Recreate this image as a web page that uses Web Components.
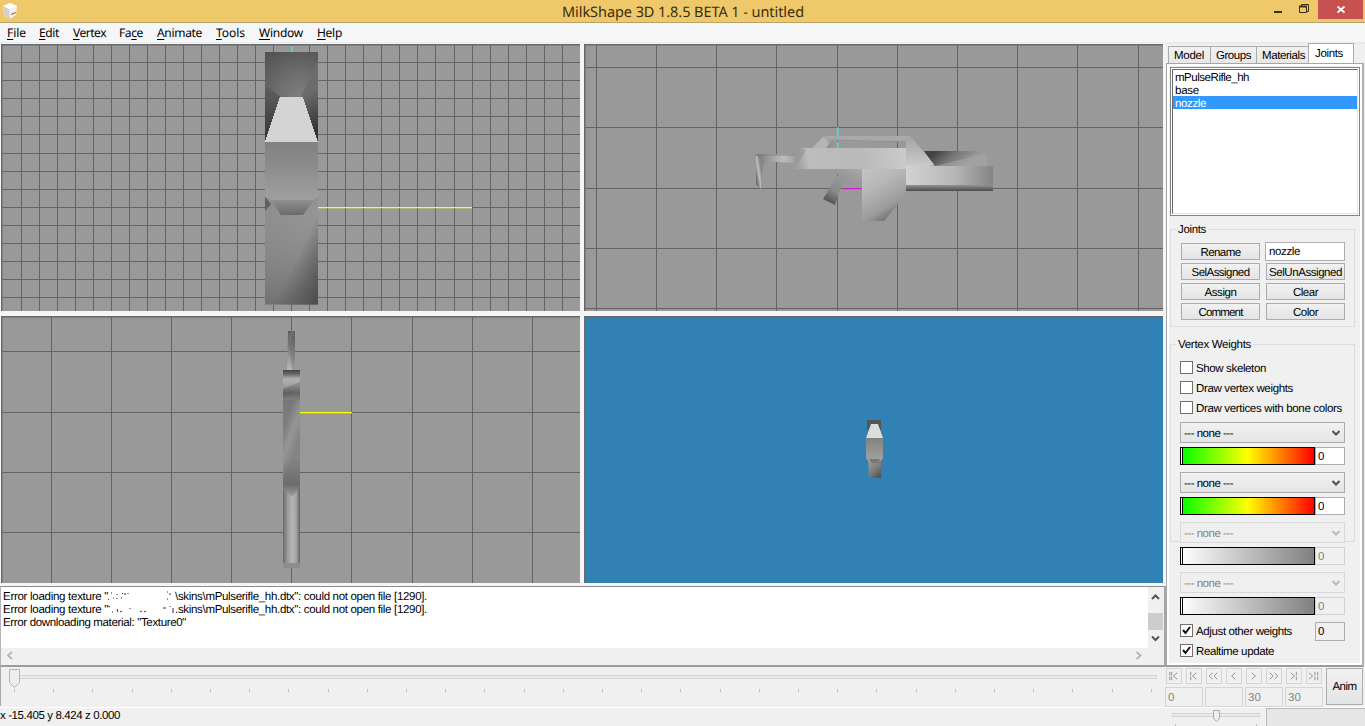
<!DOCTYPE html>
<html lang="en">
<head>
<meta charset="utf-8">
<title>MilkShape 3D 1.8.5 BETA 1 - untitled</title>
<style>
html,body{margin:0;height:726px;overflow:hidden;background:#f0f0f0;font-family:"Liberation Sans",Arial,sans-serif;font-size:11.5px;color:#000}
</style>
</head>
<body>
<milk-app></milk-app>
<script>
const pen = document.createElement('canvas').getContext('2d');
const define = (name, css, html, after) => customElements.define(name, class extends HTMLElement {
  connectedCallback() {
    if (this.shadowRoot) return;
    const root = this.attachShadow({mode: 'open'});
    root.innerHTML = `<style>*{box-sizing:border-box}${css}</style>` + (typeof html === 'function' ? html(this) : html);
    if (after) after(this, root);
  }
});

/* Text spaced so that it fills the width in its "w" attribute. */
define('fit-text', ':host{display:block;white-space:pre;text-rendering:geometricPrecision;flex:none;margin:1px 0 -1px}:host([flat]){margin:0}', '<slot></slot>', el => {
  const s = getComputedStyle(el), t = el.textContent, w = +el.getAttribute('w');
  pen.font = `${s.fontSize} ${s.fontFamily}`;
  el.style.width = w + 'px';
  el.style.letterSpacing = ((w - pen.measureText(t).width) / t.length).toFixed(3) + 'px';
});

define('title-bar', `:host{display:flex;height:23px;background:#efc869;border-bottom:1px solid #b9a36c;align-items:flex-start}
.logo{width:18px;height:18px;margin:2px 0 0 1px}.t{flex:1;display:flex;padding-left:543px;font:14.5px/23px "Noto Sans","Open Sans",sans-serif;color:#3a2f12}
.c{width:100px;height:22px}`,
`<svg class="logo" viewBox="0 0 18 18"><path d="M2 4L9 1L16 4L15 13L9 17L3 13Z" fill="#f3efec"/><path d="M2 4L8 7L9 17L3 13Z" fill="#d4cfcd"/><path d="M2 4L9 1L16 4L8 7Z" fill="#fff"/><path d="M10 12.5L15 10.5" stroke="#c0524e" stroke-width="1.3"/></svg>
<div class="t"><fit-text w="242">MilkShape 3D 1.8.5 BETA 1 - untitled</fit-text></div>
<svg class="c" viewBox="1265 0 100 22"><path d="M1274 11h8v2h-8z" fill="#3b3115"/><path d="M1299.500 6.500h7v6h-7zM1301.500 6V4.500h7V11.500H1307" fill="none" stroke="#3b3115"/><path d="M1299 5.500h8v2h-8z" fill="#3b3115"/><path d="M1318 0h45v19h-45z" fill="#c75050"/><path d="M1337.500 6.500l7 6M1344.500 6.500l-7 6" stroke="#fff" stroke-width="1.7"/></svg>`);

const menus = [['File',0,19,7],['Edit',0,20,39],['Vertex',0,33,73],['Face',2,24,119],['Animate',0,45,157],['Tools',0,29,216],['Window',0,44,259],['Help',0,25,317]];
define('menu-bar', `:host{display:grid;grid-template-columns:${menus.map((m,i)=>(menus[i+1]?menus[i+1][3]-m[3]:100)+'px').join(' ')};height:21px;padding-left:7px;background:#f5f6f7;border-bottom:2px solid #e9eaeb;font:12px/20px "Noto Sans","Open Sans",sans-serif}u{text-underline-offset:2px}`,
  menus.map(m => `<fit-text flat w="${m[2]}">${m[0].slice(0,m[1])}<u>${m[0][m[1]]}</u>${m[0].slice(m[1]+1)}</fit-text>`).join(''));

const stops = l => l.map(([o,c]) => `<stop offset="${o}" stop-color="${c}"/>`).join('');
const lg = (id,x1,y1,x2,y2,l) => `<linearGradient id="${id}" gradientUnits="userSpaceOnUse" x1="${x1}" y1="${y1}" x2="${x2}" y2="${y2}">${stops(l)}</linearGradient>`;
const frontModel = `<defs>
<radialGradient id="a" gradientUnits="userSpaceOnUse" cx="300" cy="96" r="56">${stops([[0,'#7e7e7e'],[.4,'#6e6e6e'],[1,'#505050']])}</radialGradient>${lg('a3',318,130,302,95,[[0,'#333'],[1,'#6c6c6c']])}${lg('a4',265,140,278,90,[[0,'#353535'],[1,'#5e5e5e']])}
${lg('b',0,141,0,215,[[0,'#828282'],[.25,'#888'],[.8,'#a0a0a0'],[1,'#909090']])}
${lg('c',0,199,0,215,[[0,'#929292'],[1,'#6a6a6a']])}
${lg('d',265,215,343,254,[[0,'#8e8e8e'],[.54,'#959595'],[.62,'#868686'],[1,'#383838']])}
<linearGradient id="e" x1="0" y1="0" x2="0" y2="1"><stop offset="0" stop-color="#777" stop-opacity="0"/><stop offset="1" stop-color="#5a5a5a" stop-opacity=".6"/></linearGradient></defs>
<path d="M265 52H318V141H265Z" fill="url(#a)"/><path d="M318 62V141L301 96Z" fill="url(#a3)"/><path d="M265 85L281 97L265 141Z" fill="url(#a4)"/>
<path d="M265 141H318V304.500H265Z" fill="url(#b)"/><path d="M265 197L272 200H313L318 197V304.500H265Z" fill="url(#d)"/><path d="M265 215H318V304.500H265Z" fill="url(#e)"/>
<path d="M271 200H314L303 215H281Z" fill="url(#c)"/><path d="M265 197V211L271 204Z" fill="#606060"/><path d="M280 97H303L318 142H265Z" fill="#d4d4d4" shape-rendering="crispEdges"/>`;
const sideModel = `<defs>
${lg('s1',756,0,806,0,[[0,'#777'],[.25,'#9b9b9b'],[.55,'#bdbdbd'],[1,'#858585']])}${lg('s2',800,169,900,150,[[0,'#a2a2a2'],[.1,'#bdbdbd'],[.6,'#b9b9b9'],[1,'#c9c9c9']])}
${lg('s3',862,150,905,220,[[0,'#ccc'],[.45,'#b8b8b8'],[.75,'#9b9b9b'],[1,'#4b4b4b']])}${lg('s4',906,0,993,0,[[0,'#d2d2d2'],[.55,'#b7b7b7'],[1,'#858585']])}
${lg('s5',940,148,960,170,[[0,'#434343'],[.5,'#777'],[1,'#999']])}${lg('s6',828,204,862,150,[[0,'#4c4c4c'],[.22,'#888'],[.7,'#a5a5a5'],[1,'#bbb']])}
${lg('s7',0,183,0,191,[[0,'#aaa'],[1,'#4b4b4b']])}${lg('s8',823,0,910,0,[[0,'#999'],[.25,'#b0b0b0'],[1,'#a5a5a5']])}${lg('s9',0,137,0,170,[[0,'#a4a4a4'],[1,'#cfcfcf']])}${lg('s10',756,175,762,174,[[0,'#707070'],[.5,'#c0c0c0'],[1,'#888']])}</defs>
<path d="M756 154H796V163L768 161.500L763 166L761 189L756 184Z" fill="url(#s1)"/><path d="M756 155L763 160L761 189L756 184Z" fill="url(#s10)"/><path d="M756 154H796V156L762 156Z" fill="#777" opacity=".4"/>
<path d="M834 169H863V181H849L843 181L835 205L823 199L838 175Z" fill="url(#s6)"/><path d="M846 181H862V188H843Z" fill="#999"/>
<path d="M812 148L823 136H911L932 165L906 168V148H906V142L832 141L828 148Z" fill="url(#s8)"/><path d="M823 136H906L910 138V140H832L826 138Z" fill="#a9a9a9"/><path d="M830 140L906 142" stroke="#909090"/><path d="M823 137L832 141L827 148H812Z" fill="#b5b5b5"/><path d="M825 138L834 142L830 148H826L829 142Z" fill="#838383" opacity=".5"/>
<path d="M800 148H906V169H795V154Z" fill="url(#s2)"/><path d="M795 154L800 148L806 150L795 168Z" fill="#959595" opacity=".7"/>
<path d="M862 169H906V194L884 221H862Z" fill="url(#s3)"/>
<path d="M906 140L911 137L935 165L906 170Z" fill="url(#s9)"/>
<path d="M924 151H987V166H935Z" fill="url(#s5)"/><path d="M935 166L987 153V166Z" fill="#aaa" opacity=".5"/>
<path d="M906 166H993V191H906Z" fill="url(#s4)"/><path d="M906 185H993V191H906Z" fill="url(#s7)"/>`;
const topModel = `<defs>${lg('t1',288,330,296,335,[[0,'#4f4f4f'],[.5,'#999'],[1,'#606060']])}${lg('t1b',0,331,0,371,[[0,'#555'],[1,'#bbb']])}
${lg('t2',0,370,0,568,[[0,'#444'],[.02,'#666'],[.045,'#b1b1b1'],[.08,'#a0a0a0'],[.115,'#646464'],[.16,'#858585'],[.25,'#8a8a8a'],[.45,'#888'],[.58,'#686868'],[.62,'#999'],[1,'#a5a5a5']])}
${lg('t3',283,0,300,0,[[0,'#606060'],[.28,'#9c9c9c'],[.55,'#b9b9b9'],[.78,'#a5a5a5'],[1,'#555']])}${lg('t4',283,430,300,436,[[0,'#555'],[.5,'#bbb'],[1,'#777']])}</defs>
<path d="M288 331H295V371H287Z" fill="url(#t1b)"/><path d="M288 331H295V371H292Z" fill="url(#t1)" opacity=".35"/>
<path d="M283 370H300V568H283Z" fill="url(#t2)"/><path d="M283 389L300 382V390L283 397Z" fill="#5b5b5b" opacity=".35"/><path d="M283 490L292 496L300 487V563H283Z" fill="url(#t3)" opacity=".85"/><path d="M283 400H300V490L292 496L283 490Z" fill="url(#t4)" opacity=".25"/><path d="M283 563H300V568H283Z" fill="#8d8d8d"/>`;
const sceneModel = `<defs>${lg('p1',0,438,0,460,[[0,'#818181'],[1,'#a2a2a2']])}${lg('p2',868,462,882,478,[[0,'#999'],[.5,'#7b7b7b'],[1,'#484848']])}</defs>
<path d="M867 420H881V430H867Z" fill="#555"/><path d="M871 424H878L883 438H866Z" fill="#dcdcdc"/><path d="M866 438H883V458L881 461H868L866 458Z" fill="url(#p1)"/><path d="M868 460H881V478H869Z" fill="url(#p2)"/><path d="M869 459H880L877 463H872Z" fill="#777"/>`;
const views = {
  front:{x:1,y:44,v:[21,39,57,75,93,111,129,147,165,183,201,219,237,255,273,291,309,327,345,363,381,399,417,435,454,472,490,508,526,544,562],h:[62,80,98,116,134,153,171,189,207,225,243,261,279,297],
    m:'<path d="M291 46h1.400v7h-1.400z" fill="#0ff"/>'+frontModel+'<path d="M318 207h154v1.300H318z" fill="#ff0"/>'},
  side:{x:584,y:44,v:[596,656,716,776,837,897,957,1017,1077,1138],h:[67,127,188,248,308],m:sideModel+'<path d="M837 127h1.400v9h-1.400zM837 142h1.400v6h-1.400z" fill="#0ff"/><path d="M844 188h18v1.200h-18z" fill="#d515d5"/>'},
  top:{x:1,y:316,v:[51,111,171,231,291,351,412,472,532],h:[351,412,472,532],m:topModel+'<path d="M300 412h52v1.300h-52z" fill="#ff0"/>'},
  scene:{x:584,y:316,v:[],h:[],m:sceneModel,bg:'#3281b4'}
};
define('model-view', ':host{display:block;width:579px;height:267px}svg{display:block}', el => {
  const v = views[el.getAttribute('kind')];
  return `<svg width="579" height="267" viewBox="${v.x} ${v.y} 579 267"><rect x="${v.x}" y="${v.y}" width="579" height="267" fill="${v.bg||'#999'}"/>
  <path fill="#646464" d="${v.v.map(x=>`M${x} ${v.y}h1v267h-1z`).join('')}${v.h.map(y=>`M${v.x} ${y}h579v1h-579z`).join('')}"/>
  <path fill="#696969" d="M${v.x} ${v.y}h579v1.500h-579zM${v.x} ${v.y}h1.500v267h-1.500z"/>${v.m}</svg>`;
});

define('log-box', `:host{display:grid;grid-template:61px 17px/1147px 1fr;width:1166px;height:81px;flex:none;border-top:1px solid #8b8b8b;border-bottom:2px solid #9c9c9c;border-right:2px solid #a5a5a5;border-left:1px solid #b5b5b5;background:#f0f0f0}
.lines{background:#fff;padding:3px 0 0 2px;line-height:13px}.row{display:flex;height:13px}.gap{width:67px;height:13px;flex:none}.b{grid-column:1/3}svg{display:block}`,
`<div class="lines">
<div class="row"><fit-text w="105">Error loading texture "</fit-text><svg class="gap" viewBox="0 0 67 13"><path d="M-1 8l2 2M3 3l1 0M5 8h1M9 4v1M9 8v1M13 8h1M14 4l1-1M17 3v2M20 3v1M59 9h1M62 3v2M59 2h1" stroke="#333" fill="none"/></svg><fit-text w="252">\\skins\\mPulserifle_hh.dtx": could not open file [1290].</fit-text></div>
<div class="row"><fit-text w="105">Error loading texture "</fit-text><svg class="gap" viewBox="0 0 67 13"><path d="M0 3l2 1M4 9h1M9 6l1 3M12 9l2-1M22 5v1M32 8l2 1M36 9l2-1M55 5h3M62 3v1M65 5v5" stroke="#333" fill="none"/></svg><fit-text w="252">.skins\\mPulserifle_hh.dtx": could not open file [1290].</fit-text></div>
<div class="row"><fit-text w="183">Error downloading material: "Texture0"</fit-text></div></div>
<svg width="16" height="61" viewBox="1148 587 16 61"><path d="M1148 613h15v17h-15z" fill="#cdcdcd"/><path d="M1152 599l3.500-3.500 3.500 3.500M1152 636.500l3.500 3.500 3.500-3.500" fill="none" stroke="#555" stroke-width="2"/></svg>
<svg class="b" width="1163" height="16" viewBox="1 648 1163 16"><path d="M12 652l-4 3.500 4 3.500M1136.500 652l4 3.500-4 3.500" fill="none" stroke="#b5b5b5" stroke-width="1.800"/></svg>`);

define('tab-strip', `:host{display:flex;height:21px;align-items:flex-end;padding-left:2px;width:199px}
.tab{height:18px;border:1px solid #acacac;border-bottom:0;background:linear-gradient(#f1f1f1,#e7e7e7);padding:2px 0 0 5px;line-height:15px;margin-right:-1px}
.on{height:21px;background:#fff;padding:2px 0 0 6px;line-height:16px}`,
`<div class="tab" style="width:43px"><fit-text flat w="30">Model</fit-text></div><div class="tab" style="width:47px"><fit-text flat w="35">Groups</fit-text></div><div class="tab" style="width:53px"><fit-text flat w="43">Materials</fit-text></div><div class="tab on" style="width:46px"><fit-text flat w="28">Joints</fit-text></div>`);

define('joint-list', `:host{display:block;width:190px;height:149px;flex:none;background:#fff;border:1px solid #828282;padding:1px}
.in{height:100%;border:1px solid #696969;border-right-color:#e3e3e3;border-bottom-color:#e3e3e3;line-height:15px}.r{display:flex;height:13px;padding-left:2px}.on{background:#3399ff;color:#fff}`,
`<div class="in"><div class="r"><fit-text w="74">mPulseRifle_hh</fit-text></div><div class="r"><fit-text w="24">base</fit-text></div><div class="r on"><fit-text w="31">nozzle</fit-text></div></div>`);

define('push-button', `:host{display:flex;justify-content:center;width:79px;height:17px;border:1px solid #acacac;background:linear-gradient(#f1f1f1,#e4e4e4);line-height:17px;overflow:hidden}`, el => `<fit-text w="${el.getAttribute('w')}">${el.getAttribute('label')}</fit-text>`);
define('edit-box', `:host{display:flex;align-items:center;width:30px;height:19px;border:1px solid #abadb3;background:#fff;padding-left:2px;line-height:17px}:host([off]){color:#838383;background:#f0f0f0;border-color:#d2d2d2}:host([ro]){background:#f0f0f0}`, el => el.getAttribute('w') ? `<fit-text w="${el.getAttribute('w')}">${el.getAttribute('value')}</fit-text>` : '');
define('group-box', `:host{display:block;width:185px;border:1px solid #dcdcdc}.cap{display:flex;height:13px;line-height:13px;margin:-7px 0 0 5px;padding:0 2px;background:#f0f0f0;width:max-content}`, el => `<div class="cap"><fit-text w="${el.getAttribute('w')}">${el.getAttribute('label')}</fit-text></div><slot></slot>`);
define('check-box', `:host{display:flex;height:20px;align-items:flex-start;line-height:14px}svg{margin-right:3px;flex:none}`, el => `<svg width="13" height="13"><rect x=".5" y=".5" width="12" height="12" fill="#fff" stroke="#707070"/>${el.hasAttribute('on')?'<path d="M3 6l2.500 3L10 3" fill="none" stroke="#111" stroke-width="2"/>':''}</svg><fit-text w="${el.getAttribute('w')}">${el.getAttribute('label')}</fit-text>`);
define('weight-row', `:host{display:block;height:50px;width:165px}.combo{height:21px;display:flex;justify-content:space-between;align-items:center;border:1px solid #acacac;background:linear-gradient(#f1f1f1,#e5e5e5);padding:0 4px 0 3px;line-height:19px}.combo fit-text{margin:2px 0 -2px}
.row{display:flex;margin-top:4px;height:18px}.bar{width:135px;height:18px;border:1px solid #000;background:linear-gradient(90deg,#0f0,#ff0 50%,#f00);display:flex}.bar i{width:2px;background:#fff;border-right:1px solid #000}
:host([off]) .combo{border-color:#d9d9d9;color:#838383;background:#efefef}:host([off]) .bar{background:linear-gradient(90deg,#fff,#808080)}edit-box{height:18px}`,
 el => { const off = el.hasAttribute('off'); return `<div class="combo"><fit-text w="49">--- none ---</fit-text><svg width="8" height="6"><path d="M.5 1L4 4.500L7.500 1" fill="none" stroke="${off?'#bbb':'#505050'}" stroke-width="2"/></svg></div><div class="row"><div class="bar"><i></i></div><edit-box value="0" w="7" ${off?'off':''}></edit-box></div>`; });

define('joints-panel', `:host{display:flex;flex-direction:column;width:199px;height:624px}
.page{flex:1;width:198px;border:1px solid #a6a6a6;border-right:2px solid #b2b2b2;border-bottom:2px solid #9b9b9b;background:#f0f0f0;padding:2px;display:flex;flex-direction:column;box-shadow:inset 2px 2px #fff,inset -2px -2px #fff;margin-top:-1px}
joint-list{margin:1px 0 0 1px}group-box{margin-left:1px;flex:none}.joints{height:98px;margin-top:13px}.weights{height:198px;margin-top:17px}
.grid{display:grid;grid-template-columns:79px 79px;column-gap:6px;row-gap:3px;padding:7px 0 0 10px}.grid edit-box{width:80px;height:19px;margin:-1px 0 -1px -1px;padding-left:3px}
.stack{padding:10px 0 0 9px}weight-row:first-of-type{margin-top:1px}.last{display:flex;justify-content:space-between;width:165px;margin-top:2px;height:20px}.last edit-box{margin-top:-2px}`,
`<tab-strip></tab-strip><div class="page"><joint-list></joint-list>
<group-box class="joints" label="Joints" w="28"><div class="grid"><push-button label="Rename" w="40"></push-button><edit-box value="nozzle" w="31"></edit-box><push-button label="SelAssigned" w="58"></push-button><push-button label="SelUnAssigned" w="73"></push-button><push-button label="Assign" w="32"></push-button><push-button label="Clear" w="25"></push-button><push-button label="Comment" w="44"></push-button><push-button label="Color" w="25"></push-button></div></group-box>
<group-box class="weights" label="Vertex Weights" w="73"><div class="stack"><check-box label="Show skeleton" w="70"></check-box><check-box label="Draw vertex weights" w="97"></check-box><check-box label="Draw vertices with bone colors" w="146"></check-box>
<weight-row></weight-row><weight-row></weight-row><weight-row off></weight-row><weight-row off></weight-row>
<div class="last"><check-box on label="Adjust other weights" w="96"></check-box><edit-box ro value="0" w="7"></edit-box></div><check-box on label="Realtime update" w="78"></check-box></div></group-box></div>`);

define('time-line', ':host{display:block;width:1165px;height:40px}svg{display:block}', () => `<svg width="1165" height="40" viewBox="0 667 1165 40"><path d="M0 667h1v39H0z" fill="#aaa"/><rect x="9.500" y="675.500" width="1147" height="3" fill="#e9eaea" stroke="#d4d4d4"/><path d="M9.500 669.500h10v13l-5 5-5-5z" fill="#eee" stroke="#b5b5b5"/><path fill="#c0c0c0" d="${Array.from({length:30},(_,i)=>`M${Math.round(14+i*39.2)} 689h1v3h-1z`).join('')}"/></svg>`);

const glyphs = ['M4 3v4M4 8v4M6 3v4M6 8v4M12 4L8 7.500L12 11','M5 3v4M5 8v4M11 4L7 7.500L11 11','M7 4L3.500 7.500L7 11M12 4L8.500 7.500L12 11','M10 4L6 7.500L10 11','M6 4L10 7.500L6 11','M4 4L7.500 7.500L4 11M9 4L12.500 7.500L9 11','M5 4L9 7.500L5 11M11 3v4M11 8v4','M3 4L7 7.500L3 11M9.500 3v4M9.500 8v4M12.500 3v4M12.500 8v4'];
define('play-controls', `:host{display:grid;grid-template-columns:161px 37px;height:40px;width:200px;padding-top:1px}.k{display:flex;gap:4px;padding-left:1px;height:19px}svg{flex:none;border:1px solid #d5d5d5;background:#f0f0f0}.f{display:flex;gap:2px}.f edit-box{width:38px;height:20px;border-color:#d5d5d5}push-button{height:37px;width:37px;line-height:35px}`,
`<div><div class="k">${glyphs.map(g=>`<svg width="16" height="16" viewBox="1 0 15 15"><path d="${g}" fill="none" stroke="#8b8b8b"/></svg>`).join('')}</div><div class="f"><edit-box off value="0" w="7"></edit-box><edit-box off></edit-box><edit-box off value="30" w="13"></edit-box><edit-box off value="30" w="13"></edit-box></div></div><push-button label="Anim" w="24"></push-button>`);

define('status-bar', `:host{display:flex;height:19px;border-top:1px solid #fff;align-items:flex-start}.s{display:flex;flex:1;line-height:14px}.z{width:99px;height:18px;background:#e6e6e6;border-left:1px solid #b8b8b8;border-top:1px solid #b8b8b8}`,
`<div class="s"><fit-text w="120">x -15.405 y 8.424 z 0.000</fit-text></div><svg width="98" height="18" viewBox="1168 708 98 18"><rect x="1172.500" y="713.500" width="87" height="3" fill="#e9eaea" stroke="#d4d4d4"/><path d="M1213.500 710.500h6v8l-3 3-3-3z" fill="#eee" stroke="#aaa"/><path d="M1175 724h1v2h-1zM1256 724h1v2h-1z" fill="#c0c0c0"/></svg><div class="z"></div>`);

define('milk-app', `:host{display:flex;flex-direction:column;width:1365px;height:726px;background:#f0f0f0;overflow:hidden}
.main{display:flex;height:624px;margin-top:-1px;flex:none}.left{width:1166px;padding-top:1px;background:#f5f5f5;height:624px;display:flex;flex-direction:column}
.views{display:grid;grid-template-columns:579px 579px;gap:5px 4px;padding-left:1px;height:542px;flex:none;align-content:start}.bottom{display:flex;height:40px;flex:none}title-bar,menu-bar,status-bar{flex:none}`,
`<title-bar></title-bar><menu-bar></menu-bar><div class="main"><div class="left"><div class="views"><model-view kind="front"></model-view><model-view kind="side"></model-view><model-view kind="top"></model-view><model-view kind="scene"></model-view></div><log-box></log-box></div><joints-panel></joints-panel></div><div class="bottom"><time-line></time-line><play-controls></play-controls></div><status-bar></status-bar>`);
</script>
</body>
</html>
